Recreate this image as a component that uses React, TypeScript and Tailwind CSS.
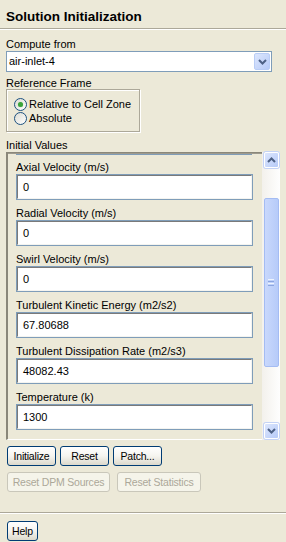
import React from "react";

const font = { fontFamily: '"Liberation Sans", Arial, sans-serif' };

function Field({ label, value }: { label: string; value: string }) {
  return (
    <div className="flex flex-col">
      <div className="h-[13px] leading-[13px] text-[11px] text-black whitespace-nowrap">{label}</div>
      <div className="w-[237px] h-[26px] border border-[#7f9db9] bg-white">
        <div className="h-full border-t border-l border-[#7a7a7a] border-b border-r border-b-[#f4f4f0] border-r-[#f4f4f0] pl-[5px] flex items-center text-[11px] text-black">
          {value}
        </div>
      </div>
    </div>
  );
}

function Btn({ children, w, disabled }: { children: React.ReactNode; w: string; disabled?: boolean }) {
  return (
    <div
      className={
        "h-[20px] rounded-[3px] border flex items-center justify-center text-[10.5px] tracking-[-0.2px] leading-none whitespace-nowrap " +
        w +
        (disabled
          ? " border-[#c9c7ba] bg-[#f5f4ea] text-[#aca899]"
          : " border-[#003c74] bg-gradient-to-b from-[#ffffff] via-[#f5f4ef] to-[#dcd9cc] text-black")
      }
    >
      {children}
    </div>
  );
}

function Chevron({ up }: { up?: boolean }) {
  return (
    <svg width="9" height="6" viewBox="0 0 9 6">
      <path
        d={up ? "M1 5 L4.5 1.5 L8 5" : "M1 1 L4.5 4.5 L8 1"}
        fill="none"
        stroke="#4d6185"
        strokeWidth="2"
      />
    </svg>
  );
}

function Radio({ checked, label }: { checked?: boolean; label: string }) {
  return (
    <div className="flex items-center h-[14px]">
      <div className="w-[13px] h-[13px] rounded-full border border-[#1c5180] bg-gradient-to-br from-[#dcdcd3] to-[#ffffff] flex items-center justify-center">
        {checked && <div className="w-[5px] h-[5px] rounded-full bg-[#3aa33a] shadow-[0_0_1px_#8ad28a]" />}
      </div>
      <span className="ml-[2px] text-[11px] leading-[13px] text-black whitespace-nowrap">{label}</span>
    </div>
  );
}

export default function App() {
  return (
    <div className="w-[286px] h-[542px] bg-[#ece9d8] overflow-hidden flex flex-col" style={font}>
      {/* Title */}
      <div className="h-[29px] border-b border-[#aca899] shadow-[0_1px_0_#ffffff] pl-[6px] pt-[9px]">
        <div className="text-[13.5px] font-bold leading-[16px] text-black">Solution Initialization</div>
      </div>

      <div className="pl-[6px] flex flex-col">
        <div className="mt-[9px] h-[13px] leading-[13px] text-[11px] text-black">Compute from</div>
        <div className="w-[266px] h-[21px] border border-[#7f9db9] bg-white flex items-center">
          <div className="flex-1 pl-[2px] text-[11px] text-black">air-inlet-4</div>
          <div className="w-[16px] h-[17px] mr-[1px] rounded-[2px] border border-[#b9cdf6] bg-gradient-to-br from-[#dce6fd] to-[#b7cbf8] flex items-center justify-center">
            <Chevron />
          </div>
        </div>

        <div className="mt-[5px] h-[12px] leading-[12px] text-[11px] text-black">Reference Frame</div>
        <div className="w-[134px] h-[43px] border border-[#aca899] shadow-[inset_1px_1px_0_#ffffff,1px_1px_0_#ffffff] pl-[7px] pt-[7px] flex flex-col">
          <Radio checked label="Relative to Cell Zone" />
          <Radio label="Absolute" />
        </div>

        <div className="mt-[7px] h-[13px] leading-[12px] text-[11px] text-black">Initial Values</div>

        {/* Panel */}
        <div className="flex h-[288px] w-[274px]">
          <div className="w-[256px] h-full border-l-2 border-t border-l-[#8a877a] border-t-[#8a877a] border-b border-b-[#ffffff] overflow-hidden flex flex-col">
            <div className="h-[1px] bg-[#9d9a8e]" />
            <div className="ml-[8px] w-[236px] h-[1px] bg-[#7f9db9]" />
            <div className="pl-[8px] pt-[6px] flex flex-col gap-[7px]">
              <Field label="Axial Velocity (m/s)" value="0" />
              <Field label="Radial Velocity (m/s)" value="0" />
              <Field label="Swirl Velocity (m/s)" value="0" />
              <Field label="Turbulent Kinetic Energy (m2/s2)" value="67.80688" />
              <Field label="Turbulent Dissipation Rate (m2/s3)" value="48082.43" />
              <Field label="Temperature (k)" value="1300" />
            </div>
          </div>
          {/* Scrollbar */}
          <div className="w-[18px] h-full bg-gradient-to-r from-[#f3f1ec] to-[#fefefe] flex flex-col items-center">
            <div className="w-[15px] h-[16px] rounded-[2px] border border-[#ffffff] bg-gradient-to-br from-[#dce6fd] to-[#b7cbf8] shadow-[0_0_0_1px_#c4d3f6] flex items-center justify-center">
              <Chevron up />
            </div>
            <div className="mt-[30px] w-[15px] h-[169px] rounded-[2px] border border-[#a4bcf3] bg-gradient-to-r from-[#c9d8fc] to-[#b6cbf9] flex flex-col items-center justify-center gap-[1px]">
              <div className="w-[6px] h-[1px] bg-[#eef4fe]" />
              <div className="w-[6px] h-[1px] bg-[#8ca6e0]" />
              <div className="w-[6px] h-[1px] bg-[#eef4fe]" />
              <div className="w-[6px] h-[1px] bg-[#8ca6e0]" />
            </div>
            <div className="flex-1" />
            <div className="mb-[1px] w-[15px] h-[16px] rounded-[2px] border border-[#ffffff] bg-gradient-to-br from-[#dce6fd] to-[#b7cbf8] shadow-[0_0_0_1px_#c4d3f6] flex items-center justify-center">
              <Chevron />
            </div>
          </div>
        </div>

        {/* Buttons */}
        <div className="mt-[6px] ml-[1px] flex gap-[4px]">
          <Btn w="w-[49px]">Initialize</Btn>
          <Btn w="w-[49px]">Reset</Btn>
          <Btn w="w-[49px]">Patch...</Btn>
        </div>
        <div className="mt-[6px] ml-[1px] flex gap-[7px]">
          <Btn w="w-[103px]" disabled>Reset DPM Sources</Btn>
          <Btn w="w-[84px]" disabled>Reset Statistics</Btn>
        </div>
      </div>

      <div className="mt-[20px] h-[1px] bg-[#aca899] shadow-[0_1px_0_#ffffff]" />
      <div className="pl-[7px] mt-[8px]">
        <Btn w="w-[31px]">Help</Btn>
      </div>
    </div>
  );
}
